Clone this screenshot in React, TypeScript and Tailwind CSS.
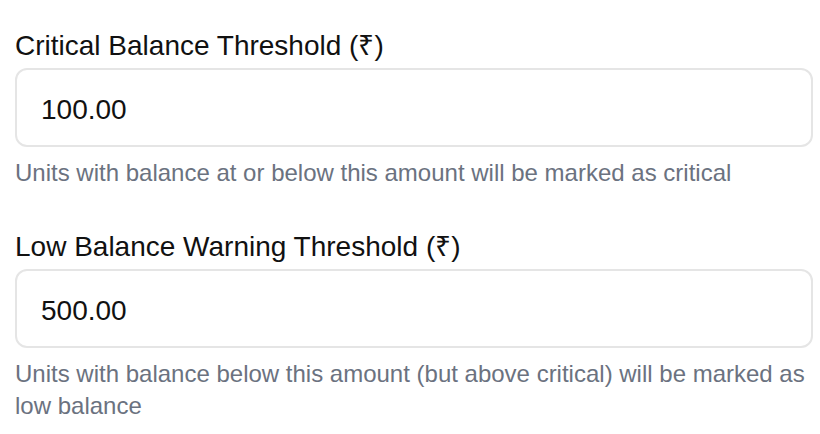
import { useState } from "react";

const Field = ({
  label,
  value,
  help,
}: {
  label: string;
  value: string;
  help: string;
}) => {
  const [v, setV] = useState(value);
  return (
    <div className="flex flex-col">
      <label className="text-[28px] leading-[28px] text-[#111111] mb-[8px]">{label}</label>
      <input
        type="text"
        value={v}
        onChange={(e) => setV(e.target.value)}
        className="h-[79px] w-full rounded-[12px] border-2 border-[#e5e5e5] bg-white pl-[24px] pt-[4px] text-[28px] text-[#111111] outline-none"
      />
      <p className="mt-[10px] text-[24px] leading-[32px] text-[#6b7280]">{help}</p>
    </div>
  );
};

export default function App() {
  return (
    <div
      className="min-h-screen w-[820px] bg-white pt-[32px] pl-[15px] pr-[7px]"
      style={{ fontFamily: '"Liberation Sans", Arial, sans-serif' }}
    >
      <div className="flex flex-col gap-[44px]">
        <Field
          label="Critical Balance Threshold (₹)"
          value="100.00"
          help="Units with balance at or below this amount will be marked as critical"
        />
        <Field
          label="Low Balance Warning Threshold (₹)"
          value="500.00"
          help="Units with balance below this amount (but above critical) will be marked as low balance"
        />
      </div>
    </div>
  );
}
